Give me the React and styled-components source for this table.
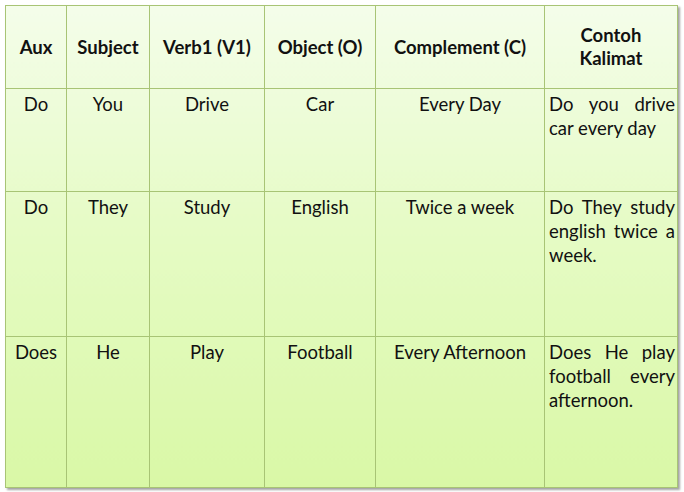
import React from "react";
import styled, { createGlobalStyle } from "styled-components";

const Global = createGlobalStyle`
  html, body { margin: 0; padding: 0; background: #ffffff; }
  body { width: 684px; height: 492px; overflow: hidden; }
`;

const Page = styled.div`
  padding: 5px 0 0 5px;
  font-family: Lato, "Open Sans", sans-serif;
  color: #111;
`;

const Table = styled.table`
  width: 672px;
  height: 483px;
  border-collapse: collapse;
  table-layout: fixed;
  background: linear-gradient(180deg, #f4fdea 0%, #e6fbc6 45%, #d9f8a6 100%);
  box-shadow: 2px 2px 2px rgba(90, 90, 90, 0.55);
`;

const Col = styled.col`
  width: ${(p) => p.$w}px;
`;

const Row = styled.tr`
  height: ${(p) => p.$h}px;
`;

const Head = styled.th`
  border: 1px solid #a8c475;
  font-weight: 700;
  font-size: 18.5px;
  line-height: 23px;
  text-align: center;
  vertical-align: middle;
  padding: 0 2px;
`;

const Cell = styled.td`
  border: 1px solid #a8c475;
  font-size: 18.5px;
  line-height: 24px;
  text-align: ${(p) => (p.$justify ? "justify" : "center")};
  vertical-align: top;
  padding: ${(p) => (p.$justify ? "3px 2px 0 4px" : "3px 2px 0")};
  font-weight: 400;
`;

const cols = [61, 83, 115, 111, 169, 133];
const heads = ["Aux", "Subject", "Verb1 (V1)", "Object (O)", "Complement (C)", "Contoh Kalimat"];
const rows = [
  { h: 103, c: ["Do", "You", "Drive", "Car", "Every Day", "Do you drive car every day"] },
  { h: 145, c: ["Do", "They", "Study", "English", "Twice a week", "Do They study english twice a week."] },
  { h: 151, c: ["Does", "He", "Play", "Football", "Every Afternoon", "Does He play football every afternoon."] },
];

export default function App() {
  return (
    <Page>
      <Global />
      <Table>
        <colgroup>
          {cols.map((w, i) => (
            <Col key={i} $w={w} />
          ))}
        </colgroup>
        <thead>
          <Row $h={83}>
            {heads.map((h) => (
              <Head key={h}>{h === "Contoh Kalimat" ? <>Contoh<br />Kalimat</> : h}</Head>
            ))}
          </Row>
        </thead>
        <tbody>
          {rows.map((r, i) => (
            <Row key={i} $h={r.h}>
              {r.c.map((t, j) => (
                <Cell key={j} $justify={j === 5}>
                  {t}
                </Cell>
              ))}
            </Row>
          ))}
        </tbody>
      </Table>
    </Page>
  );
}
